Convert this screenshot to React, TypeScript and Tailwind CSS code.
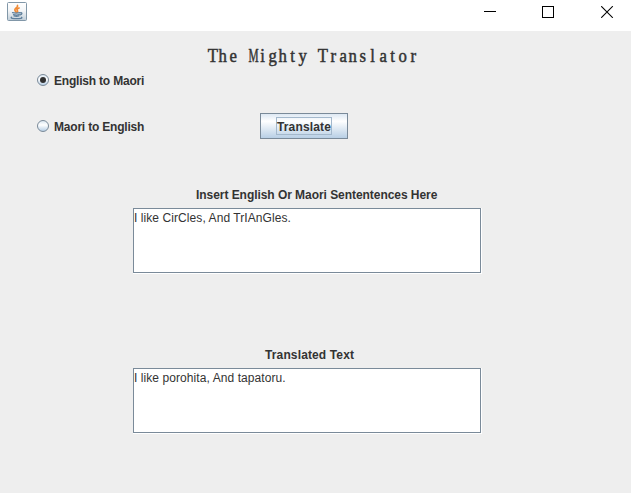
import React, { useState } from "react";

const TITLE = "The Mighty Translator";

function JavaIcon() {
  return (
    <svg width="20" height="20" viewBox="0 0 20 20">
      <defs>
        <linearGradient id="tile" x1="0" y1="0" x2="0" y2="1">
          <stop offset="0" stopColor="#ffffff" />
          <stop offset="0.45" stopColor="#f4f6f8" />
          <stop offset="1" stopColor="#bfcdd8" />
        </linearGradient>
      </defs>
      <rect x="0.5" y="0.5" width="19" height="18" rx="1" fill="url(#tile)" stroke="#8197a8" />
      <g fill="none" strokeLinecap="round">
        <path d="M10.5 3.500c1 2-3.500 3-2.600 4.800.3.800 1 1.200 1 1.800M12 6c-2 .9-2.600 1.700-1.600 2.700.5.600.1 1.200-.5 1.600" stroke="#f08a35" strokeWidth="1.700" />
        <path d="M5.500 10.700c2 .5 5.500.4 7.500 0M6.500 12.600c1.800.5 4.200.5 5.800 0M7 14c1.500.5 3.500.5 5 0M13.300 10.800c2.300-.6 2 1.500 0 2M4.500 15.200c-1.500 1 2 1.500 5 1.500 3.500 0 6.500-.6 5-1.500" stroke="#5f7f9b" strokeWidth="1.250" />
      </g>
    </svg>
  );
}

function TitleBar() {
  return (
    <header className="flex h-[31px] items-start bg-white">
      <div className="ml-[7px] mt-[2px]">
        <JavaIcon />
      </div>
      <div className="ml-auto mr-[17px] mt-[6px] flex gap-[46px]">
        <svg width="12" height="12" shapeRendering="crispEdges">
          <path d="M0 5.5h12" stroke="#000" />
        </svg>
        <svg width="12" height="12" shapeRendering="crispEdges">
          <rect x="0.5" y="0.5" width="11" height="11" fill="none" stroke="#000" />
        </svg>
        <svg className="ml-px" width="13" height="12" viewBox="0 0 13 12">
          <path d="M.2 .2 11.800 11.800M11.800 .2 .2 11.800" stroke="#000" strokeWidth="1.100" />
        </svg>
      </div>
    </header>
  );
}

function Radio({ label, checked, onSelect }: { label: string; checked: boolean; onSelect: () => void }) {
  return (
    <button role="radio" aria-checked={checked} onClick={onSelect} className="flex h-[14px] items-center gap-[5px]">
      <span className="flex size-3 items-center justify-center rounded-full border border-[#7a8a99] bg-linear-to-b from-[#dce8f2] via-white via-40% to-[#b8cfe5]">
        {checked && <span className="size-1.5 rounded-full bg-[#303030]" />}
      </span>
      <span className="pt-[2px] tracking-[-0.2px]">{label}</span>
    </button>
  );
}

function TextBox({ text }: { text: string }) {
  return (
    <div className="ml-[133px] h-[66px] w-[349px] border-r border-b border-white">
      <div className="h-[65px] border border-[#7a8a99] bg-white pt-[2px] text-[12px] leading-[14px] font-normal tracking-[0.075px]">
        {text}
      </div>
    </div>
  );
}

export default function App() {
  const [mode, setMode] = useState("maori");
  return (
    <div className="h-[493px] w-[631px] overflow-hidden bg-[#eeeeee] font-['Liberation_Sans',sans-serif] text-[12px] leading-[14px] font-bold text-[#333333]">
      <TitleBar />
      <main>
        <h1 className="ml-[208px] flex h-[42px] pt-[13px] font-['Liberation_Serif',serif] text-[19px] leading-[23px] font-normal [-webkit-text-stroke:0.5px_#333333]">
          {TITLE.split("").map((letter, i) => (
            <span key={i} className="flex w-[10px] justify-center whitespace-pre">
              <span className={letter === "M" ? "scale-x-[0.6]" : "scale-x-[0.88]"}>{letter}</span>
            </span>
          ))}
        </h1>
        <div className="ml-[37px]">
          <Radio label="English to Maori" checked={mode === "maori"} onSelect={() => setMode("maori")} />
        </div>
        <div className="mt-[26px] ml-[37px] flex h-[26px] items-center">
          <div className="w-[223px]">
            <Radio label="Maori to English" checked={mode === "english"} onSelect={() => setMode("english")} />
          </div>
          <button className="flex h-[26px] w-[88px] items-center justify-center border border-[#7a8a99] bg-linear-to-b from-[#dde8f3] via-white via-30% to-[#b8cfe5]">
            <span className="flex h-[18px] w-[56px] items-center justify-center border border-[#a3b8cc] pt-[2px] tracking-[0.15px]">Translate</span>
          </button>
        </div>
        <div className="mt-[49px] mb-[6px] ml-[196px] tracking-[-0.05px]">Insert English Or Maori Sententences Here</div>
        <TextBox text="I like CirCles, And TrIAnGles." />
        <div className="mt-[74px] mb-[6px] ml-[265px] tracking-[0.13px]">Translated Text</div>
        <TextBox text="I like porohita, And tapatoru." />
      </main>
    </div>
  );
}
